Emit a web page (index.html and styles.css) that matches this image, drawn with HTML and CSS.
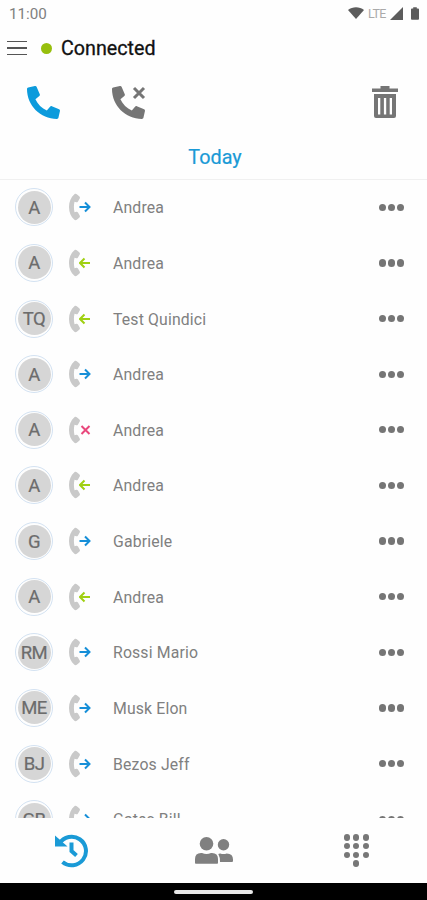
FILE: index.html
```html
<!DOCTYPE html>
<html lang="en">
<head>
    <meta charset="UTF-8">
    <meta name="viewport" content="width=device-width, initial-scale=1.0">
    <title>Call History</title>
    <link rel="stylesheet" href="styles.css">
</head>
<body>
    <!-- Shared icons -->
    <svg class="sprite">
        <symbol id="phone" viewBox="0 0 512 512">
            <path transform="matrix(-1 0 0 1 512 0)" d="M493.4 24.6l-104-24c-11.3-2.6-22.9 3.3-27.5 13.9l-48 112c-4.2 9.8-1.4 21.3 6.9 28l60.6 49.6c-36 76.7-98.9 140.5-177.2 177.2l-49.6-60.6c-6.8-8.3-18.2-11.1-28-6.9l-112 48C3.9 366.5-2 378.1.6 389.4l24 104C27.1 504.2 36.7 512 48 512c256.1 0 464-207.5 464-464 0-11.2-7.7-20.9-18.6-23.4z"/>
        </symbol>
        <symbol id="handset" viewBox="0 0 11 28">
            <path d="M5.4 1.200C-1.800 7-1.800 21 5.400 26.800c.8.600 1.700.5 2.400-.1l2.400-2c.8-.7 1-1.500.5-2.300l-1.700-2.800c-.4-.7-1-.9-1.700-.8l-1.800.4c-.8-3.400-.8-7 0-10.400l1.800.4c.7.1 1.300-.1 1.700-.8l1.700-2.800c.5-.8.3-1.600-.5-2.300l-2.400-2C7.100.7 6.200.6 5.400 1.200z"/>
        </symbol>
        <symbol id="out" viewBox="0 0 12 12"><path d="M.5 6h10M6 1.500 10.500 6 6 10.500"/></symbol>
        <symbol id="in" viewBox="0 0 12 12"><path d="M11 6H1.500M5.500 1.500 1 6l4.500 4.500"/></symbol>
        <symbol id="missed" viewBox="0 0 12 12"><path d="M2.500 2l8 8M10.500 2l-8 8"/></symbol>
    </svg>

    <div class="status-bar">
        <span class="clock">11:00</span>
        <svg class="wifi" viewBox="0 0 16 12"><path d="M0 3C4.500-.7 11.500-.7 16 3L8 12z"/></svg>
        <span class="lte">LTE</span>
        <svg class="signal" viewBox="0 0 13 13"><path d="M13 0v13H0z"/></svg>
        <svg class="battery" viewBox="0 0 9 14"><path d="M2.500 0h4v1.500H8q1 0 1 1V13q0 1-1 1H1q-1 0-1-1V2.500q0-1 1-1h1.500z"/></svg>
    </div>

    <header class="header">
        <div class="menu"><i></i><i></i><i></i></div>
        <span class="dot"></span>
        <span class="state">Connected</span>
    </header>

    <div class="toolbar">
        <svg class="tool all"><use href="#phone"/></svg>
        <div class="missed-filter">
            <svg class="tool"><use href="#phone"/></svg>
            <svg class="cross" viewBox="0 0 14 14"><path d="M2 2l10 10M12 2 2 12"/></svg>
        </div>
        <svg class="trash" viewBox="0 0 26 32">
            <path d="M8.500 0h9v2.500H26V6H0V2.500h8.500z"/>
            <path fill-rule="evenodd" d="M2 8h22v22q0 2-2 2H4q-2 0-2-2zM6 12v16.500h2.300V12zM11.900 12v16.500h2.300V12zM17.700 12v16.500H20V12z"/>
        </svg>
    </div>

    <div class="day">Today</div>

    <div class="calls" id="calls"></div>

    <nav class="tabs">
        <div class="tab">
            <svg class="history" viewBox="0 0 34 34">
                <path class="line" d="M4.500 9.500A14.300 14.300 0 1 1 7.500 28"/>
                <path class="line hand" d="M16.500 8.500V17l5 4.500"/>
                <path class="fill" d="M0 1.500 12.500 12.500H0z"/>
            </svg>
        </div>
        <div class="tab">
            <svg class="people" viewBox="0 0 38 27">
                <circle cx="11.500" cy="6.800" r="6.800"/>
                <circle cx="28.500" cy="7.800" r="5.700"/>
                <path d="M0 26v-4q0-6 6-6h1q4.500 1.800 9 0h1q6 0 6 6v4q0 .8-.8.800H.8Q0 26.800 0 26z"/>
                <path d="M23.300 17q.8-.7 2-.6 3.200 1.200 6.400 0 6.300 0 6.300 6V24q0 1-1 1H25q.1-5-1.700-8z"/>
            </svg>
        </div>
        <div class="tab">
            <div class="keypad">
                <i></i><i></i><i></i>
                <i></i><i></i><i></i>
                <i></i><i></i><i></i>
                <i class="zero"></i>
            </div>
        </div>
    </nav>

    <div class="gesture-bar"><span></span></div>

    <script>
        // initials, call type, name
        var calls = [
            ["A", "out", "Andrea"],
            ["A", "in", "Andrea"],
            ["TQ", "in", "Test Quindici"],
            ["A", "out", "Andrea"],
            ["A", "missed", "Andrea"],
            ["A", "in", "Andrea"],
            ["G", "out", "Gabriele"],
            ["A", "in", "Andrea"],
            ["RM", "out", "Rossi Mario"],
            ["ME", "out", "Musk Elon"],
            ["BJ", "out", "Bezos Jeff"],
            ["GB", "out", "Gates Bill"]
        ];

        var html = "";
        calls.forEach(function(call) {
            html += '<div class="call">' +
                '<div class="avatar"><span>' + call[0] + '</span></div>' +
                '<div class="type">' +
                '<svg class="handset"><use href="#handset"/></svg>' +
                '<svg class="arrow ' + call[1] + '"><use href="#' + call[1] + '"/></svg>' +
                '</div>' +
                '<span class="name">' + call[2] + '</span>' +
                '<div class="more"><i></i><i></i><i></i></div>' +
                '</div>';
        });
        document.getElementById("calls").innerHTML = html;
    </script>
</body>
</html>
```
FILE: styles.css
```css
* {
    box-sizing: border-box;
}

body {
    margin: 0;
    height: 900px;
    display: flex;
    flex-direction: column;
    background-color: #fefefe;
    font-family: Roboto, sans-serif;
    overflow: hidden;
}

svg {
    display: block;
    flex: none;
}

.sprite {
    display: none;
}

/* Status bar */
.status-bar {
    display: flex;
    align-items: center;
    height: 28px;
    flex: none;
    padding: 0 8px 0 9px;
    color: #808080;
    fill: #5c5c5c;
}

.clock {
    flex: 1;
    font-size: 15.2px;
}

.wifi {
    width: 16px;
    height: 12px;
    margin-top: -2px;
}

.lte {
    width: 20px;
    margin: -1px 2px 0 4px;
    font-size: 12.5px;
    letter-spacing: -0.6px;
    color: #aaa;
}

.signal {
    width: 13px;
    height: 13px;
    margin: -1px 8px 0 0;
}

.battery {
    width: 8px;
    height: 13px;
    margin-top: -1px;
}

/* Header */
.header {
    display: flex;
    align-items: center;
    height: 40px;
    flex: none;
    padding-left: 7px;
}

.menu {
    display: grid;
    gap: 5px;
    width: 20px;
}

.menu i {
    height: 1.5px;
    background-color: #555;
}

.dot {
    width: 11px;
    height: 11px;
    margin: 0 9px 0 14px;
    border-radius: 50%;
    background-color: #97bf0d;
}

.state {
    font-size: 19.7px;
    color: #111;
    -webkit-text-stroke: 0.3px #111;
}

/* Toolbar */
.toolbar {
    display: flex;
    height: 70px;
    flex: none;
    padding: 18px 29px 0 27px;
    fill: #757575;
}

.tool {
    width: 33px;
    height: 33px;
}

.all {
    fill: #0c9bdc;
}

.missed-filter {
    position: relative;
    margin: 0 auto 0 52px;
}

.cross {
    position: absolute;
    top: 0;
    right: -1px;
    width: 14px;
    height: 14px;
    stroke: #757575;
    stroke-width: 3;
}

.trash {
    width: 26px;
    height: 32px;
}

.day {
    height: 42px;
    flex: none;
    border-bottom: 1px solid #f0f0f0;
    text-align: center;
    font-size: 19.8px;
    line-height: 39px;
    padding-left: 3px;
    color: #1a9ad6;
    -webkit-text-stroke: 0.2px #1a9ad6;
}

/* Call list */
.calls {
    height: 638px;
    flex: none;
    overflow: hidden;
}

.call {
    display: flex;
    align-items: center;
    height: 55.64px;
    padding: 0 23px 0 15px;
}

.avatar {
    width: 38px;
    height: 38px;
    margin-top: -1px;
    padding: 1.5px;
    border: 1px solid #d3e2f2;
    border-radius: 50%;
}

.avatar span {
    display: block;
    height: 33px;
    border-radius: 50%;
    background-color: #d6d6d6;
    text-align: center;
    font-size: 18.5px;
    letter-spacing: -0.5px;
    line-height: 35px;
    color: #6c6c6c;
    -webkit-text-stroke: 0.2px #6c6c6c;
}

.type {
    display: flex;
    align-items: center;
    width: 44px;
    margin: -1px 0 0 16px;
}

.handset {
    width: 11px;
    height: 28px;
    fill: #c9c9c9;
}

.arrow {
    width: 12px;
    height: 12px;
    margin-left: -1px;
    fill: none;
    stroke-width: 2;
}

.arrow.out {
    stroke: #168fd8;
}

.arrow.in {
    stroke: #a0d012;
}

.arrow.missed {
    stroke: #e9477c;
}

.name {
    flex: 1;
    font-size: 15.8px;
    letter-spacing: 0.15px;
    color: #808080;
}

.more {
    display: flex;
    gap: 1.8px;
    margin-top: -1px;
}

.more i {
    width: 7.2px;
    height: 7.2px;
    border-radius: 50%;
    background-color: #757575;
}

/* Bottom tabs */
.tabs {
    display: flex;
    height: 65px;
    flex: none;
}

.tab {
    flex: 1;
    display: flex;
    justify-content: center;
    align-items: center;
    padding-left: 1px;
    fill: #808080;
}

.history {
    width: 34px;
    height: 34px;
}

.line {
    fill: none;
    stroke: #1a9ad6;
    stroke-width: 4;
}

.fill {
    fill: #1a9ad6;
}

.people {
    width: 38px;
    height: 27px;
}

.keypad {
    display: grid;
    grid-template-columns: repeat(3, 6.2px);
    gap: 2.5px 3.5px;
}

.keypad i {
    height: 6.2px;
    border-radius: 50%;
    background-color: #777;
}

.keypad .zero {
    grid-column: 2;
}

/* System gesture bar */
.gesture-bar {
    flex: 1;
    display: flex;
    justify-content: center;
    align-items: center;
    background-color: #000;
}

.gesture-bar span {
    width: 79px;
    height: 4px;
    border-radius: 2px;
    background-color: #e8e8e8;
}
```
